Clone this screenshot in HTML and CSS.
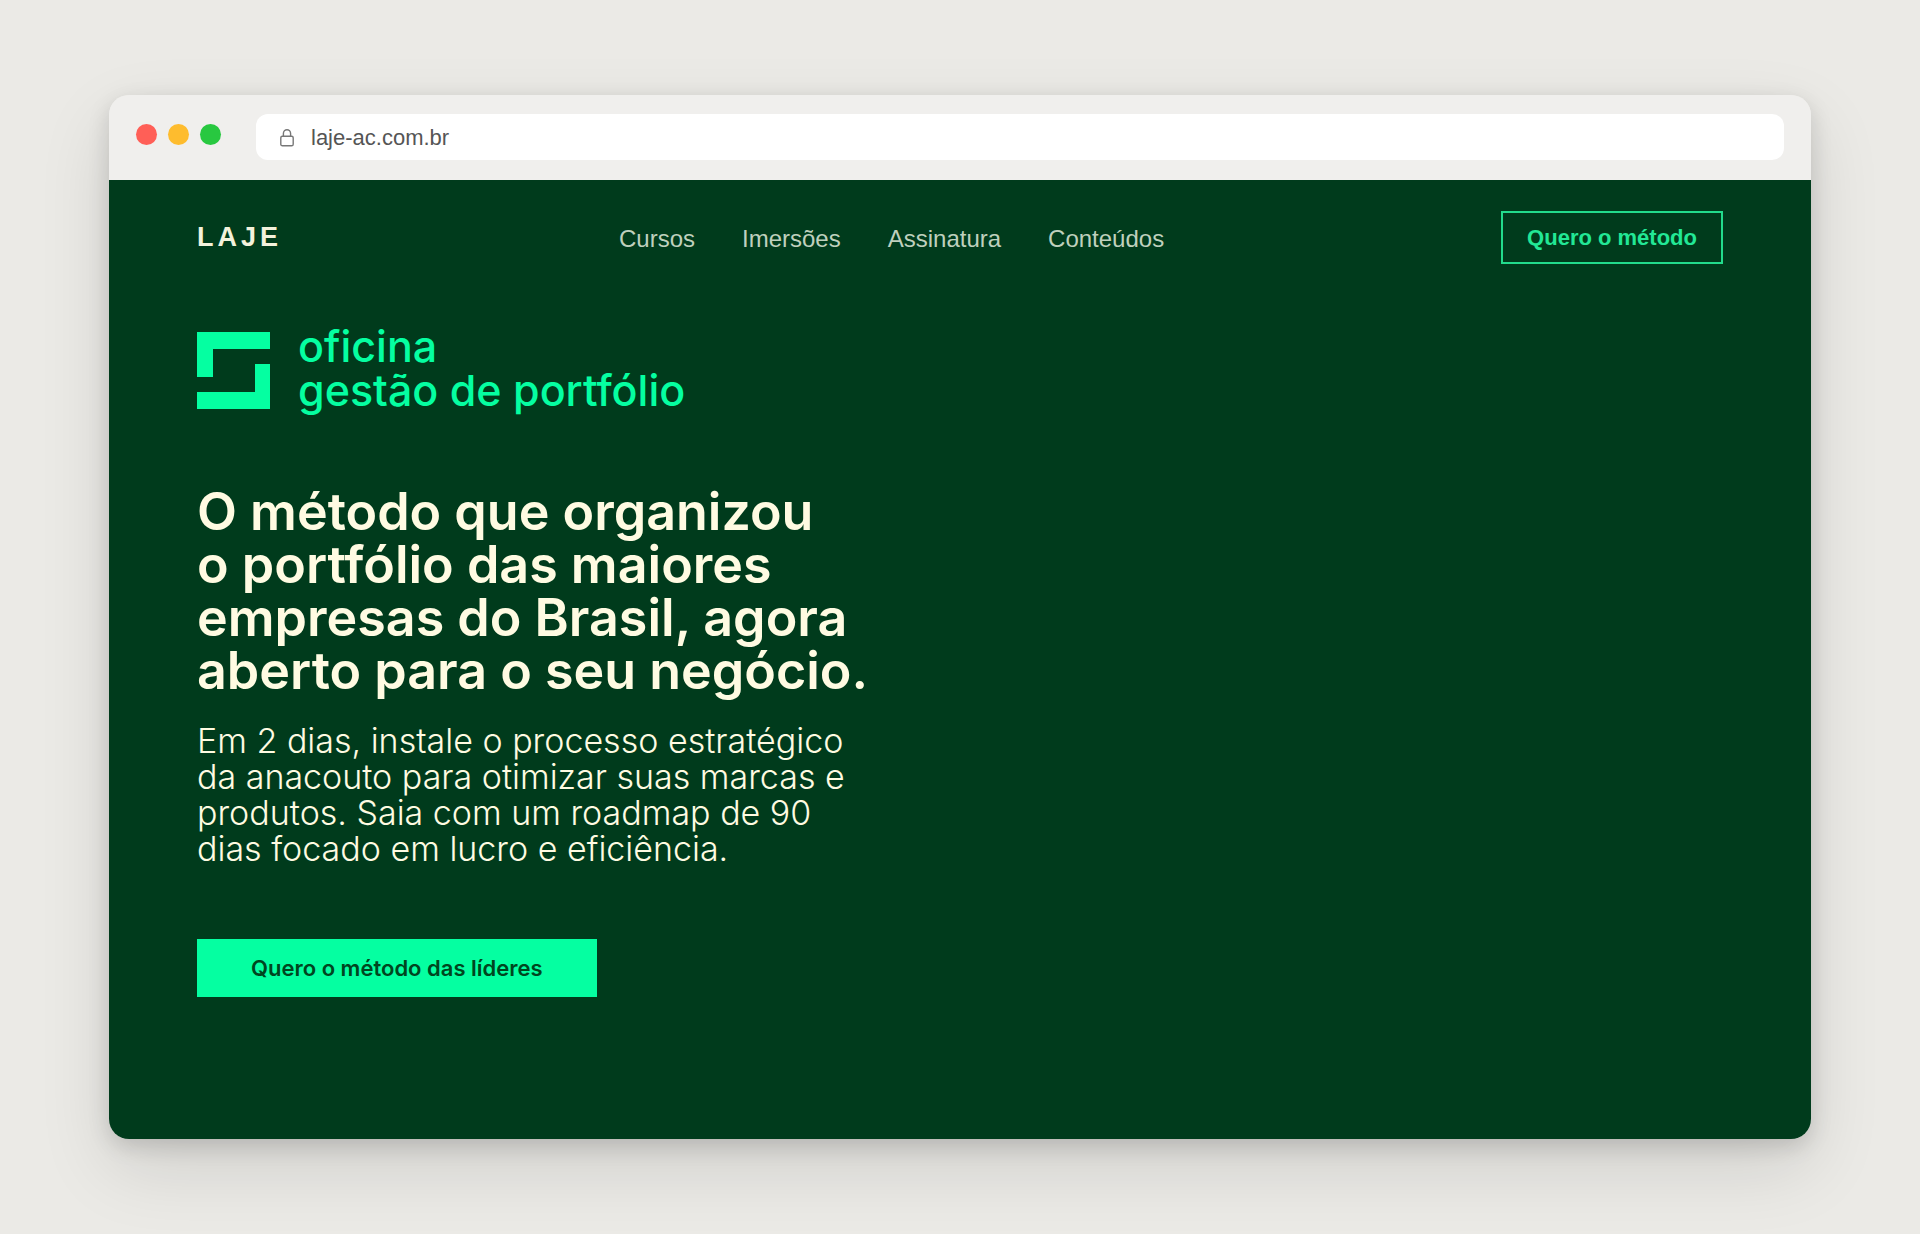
FILE: index.html
```html
<!DOCTYPE html>
<html lang="pt-BR">
<head>
  <meta charset="UTF-8">
  <meta name="viewport" content="width=device-width, initial-scale=1">
  <title>LAJE – Oficina gestão de portfólio</title>
  <link rel="stylesheet" href="styles.css">
</head>
<body>
  <div class="window">
    <div class="toolbar">
      <div class="dots">
        <span class="dot red"></span>
        <span class="dot yellow"></span>
        <span class="dot green"></span>
      </div>
      <div class="address">
        <svg class="lock" viewBox="0 0 14 18" fill="none" stroke="currentColor" stroke-width="1.4">
          <rect x="0.8" y="7.2" width="12.4" height="9.6" rx="1.6"/>
          <path d="M3.4 7.2V4.4a3.6 3.6 0 0 1 7.2 0v2.8"/>
        </svg>
        <span>laje-ac.com.br</span>
      </div>
    </div>

    <div class="site">
      <header class="header">
        <a class="brand" href="#">LAJE</a>
        <nav class="nav">
          <a href="#">Cursos</a>
          <a href="#">Imersões</a>
          <a href="#">Assinatura</a>
          <a href="#">Conteúdos</a>
        </nav>
        <button class="btn-outline" type="button">Quero o método</button>
      </header>

      <main class="hero">
        <div class="logo">
          <svg class="logo-mark" viewBox="0 0 73 77" fill="currentColor">
            <path d="M0 0h73v17H16v28H0z"/>
            <path d="M58 32h15v45H0V60h58z"/>
          </svg>
          <p class="logo-text">oficina<br>gestão de portfólio</p>
        </div>
        <h1>O método que organizou<br>o portfólio das maiores<br>empresas do Brasil, agora<br>aberto para o seu negócio.</h1>
        <p class="lead">Em 2 dias, instale o processo estratégico<br>da anacouto para otimizar suas marcas e<br>produtos. Saia com um roadmap de 90<br>dias focado em lucro e eficiência.</p>
        <button class="btn-primary" type="button">Quero o método das líderes</button>
      </main>
    </div>
  </div>
</body>
</html>
```
FILE: styles.css
```css
* {
  box-sizing: border-box;
}
body {
  margin: 0;
  min-height: 100vh;
  padding: 95px 109px;
  display: flex;
  background: #ebeae6;
  font-family: "Liberation Sans", Arial, sans-serif;
}
h1, p {
  margin: 0;
}
a {
  color: inherit;
  text-decoration: none;
}
button {
  cursor: pointer;
}

/* Browser window */
.window {
  flex: 1;
  display: flex;
  flex-direction: column;
  border-radius: 20px;
  overflow: hidden;
  box-shadow: 0 28px 72px rgba(0, 0, 0, 0.12), 0 7px 22px rgba(0, 0, 0, 0.14);
}
.toolbar {
  display: flex;
  align-items: flex-start;
  gap: 35px;
  padding: 19px 27px 20px;
  background: #f0efed;
}
.dots {
  display: flex;
  gap: 11px;
  padding-top: 10px;
}
.dot {
  width: 21px;
  height: 21px;
  border-radius: 50%;
}
.red {
  background: #ff5f57;
}
.yellow {
  background: #febc2e;
}
.green {
  background: #28c840;
}
.address {
  flex: 1;
  height: 46px;
  padding: 2px 24px 0;
  display: flex;
  align-items: center;
  gap: 17px;
  border-radius: 12px;
  background: #fff;
  color: #555;
  font-size: 22px;
}
.lock {
  width: 14px;
  height: 18px;
  color: #777;
}

/* Site */
.site {
  flex: 1;
  padding: 31px 88px;
  background: #003b1c;
}
.header {
  display: flex;
  align-items: center;
  justify-content: space-between;
}
.brand {
  color: #f3f2dc;
  font-size: 27px;
  font-weight: bold;
  letter-spacing: 4px;
}
.nav {
  display: flex;
  gap: 47px;
  padding-top: 2px;
  color: #bfd0bd;
  font-size: 24px;
}
.btn-outline {
  height: 53px;
  padding: 0 24px;
  border: 2px solid #22dc8c;
  background: none;
  color: #22e896;
  font-family: inherit;
  font-size: 22px;
  font-weight: bold;
}

/* Hero */
.hero {
  padding-top: 60px;
  font-family: Inter, "Liberation Sans", sans-serif;
  color: #fffbe2;
}
.logo {
  display: flex;
  align-items: flex-end;
  gap: 28px;
  color: #05ffa1;
}
.logo-mark {
  width: 73px;
  height: 77px;
  margin-bottom: 3px;
}
.logo-text {
  font-size: 43px;
  font-weight: 500;
  line-height: 44px;
}
.hero h1 {
  margin-top: 73px;
  font-size: 52px;
  font-weight: 600;
  line-height: 53px;
}
.lead {
  margin-top: 26px;
  font-size: 34px;
  font-weight: 300;
  line-height: 36px;
}
.btn-primary {
  margin-top: 72px;
  height: 58px;
  padding: 0 54px;
  border: none;
  background: #05ffa1;
  color: #00461f;
  font-family: inherit;
  font-size: 22px;
  font-weight: 600;
}
```
